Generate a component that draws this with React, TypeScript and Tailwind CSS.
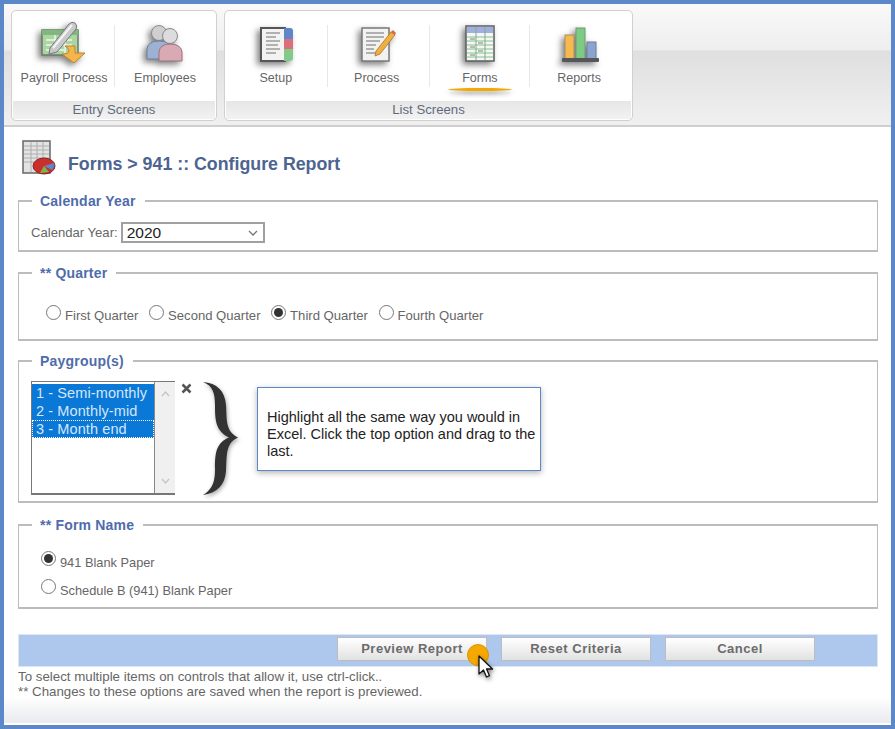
import { ReactNode } from "react";

const shadow = "drop-shadow-[-3px_3px_3px_rgba(0,0,0,0.5)]";

const PayrollIcon = () => (
  <svg width="46" height="42" viewBox="0 0 46 42" className={shadow}>
    <rect x="1" y="9" width="36" height="25" fill="#a9d6a2" stroke="#6b7a68" strokeWidth="1.5" />
    <rect x="1" y="9" width="36" height="5" fill="#7fb77c" />
    <path d="M5 19h26M5 24h26M5 29h18M14 14v18M24 14v18" stroke="#eef7ea" strokeWidth="1.5" />
    <path d="M9 27 L28 3 Q31 0 34 2 Q37 5 35 8 L16 31 L8 33 Z" fill="#c9c9cc" stroke="#77777c" strokeWidth="1" />
    <path d="M12 27 L31 4" stroke="#f4f4f4" strokeWidth="2" />
    <path d="M24 25 H34 V32 H44 L33 42 L21 33 Q28 33 28 30 Q28 27 24 25 Z" fill="#f5b54a" stroke="#b9852d" strokeWidth="1" />
  </svg>
);

const EmployeesIcon = () => (
  <svg width="38" height="38" viewBox="0 0 38 38" className={shadow}>
    <circle cx="13" cy="8" r="7.5" fill="#cfcfd1" stroke="#8a8a8e" />
    <path d="M1 34 V24 Q2 16 13 16 Q24 16 25 24 V34 Z" fill="#9db2d3" stroke="#6f7f9a" />
    <circle cx="24" cy="11" r="7.5" fill="#dcdcde" stroke="#8a8a8e" />
    <path d="M13 36 V27 Q14 19 24 19 Q35 19 36 27 V36 Z" fill="#d9aab4" stroke="#98727c" />
  </svg>
);

const SetupIcon = () => (
  <svg width="34" height="36" viewBox="0 0 34 36" className={shadow}>
    <rect x="1" y="1" width="24" height="33" fill="#f3f3f1" stroke="#55565a" strokeWidth="2" />
    <path d="M6 6h14M6 10h10M6 14h14M6 18h12M6 22h14M6 26h10" stroke="#9c9c9c" strokeWidth="1.6" />
    <path d="M24 1 H30 Q33 1 33 4 V12 H24 Z" fill="#5f86c8" />
    <path d="M24 12 H33 V22 H24 Z" fill="#d9707c" />
    <path d="M24 22 H33 V31 Q33 34 30 34 H24 Z" fill="#84c98a" />
  </svg>
);

const ProcessIcon = () => (
  <svg width="35" height="36" viewBox="0 0 35 36" className={shadow}>
    <rect x="1" y="1" width="27" height="33" fill="#f2f2f0" stroke="#77787b" strokeWidth="1.5" />
    <path d="M5 6h18M5 10h18M5 14h14M5 18h10M5 22h8M5 26h10" stroke="#9a9a9a" strokeWidth="1.6" />
    <path d="M15 24 L30 5 L34 8 L19 27 L14 29 Z" fill="#f0b040" stroke="#a9762a" strokeWidth="0.8" />
    <path d="M30 5 L32 3 L35 6 L34 8 Z" fill="#d76a55" />
  </svg>
);

const FormsIcon = () => (
  <svg width="30" height="38" viewBox="0 0 30 38" className={shadow}>
    <rect x="1" y="1" width="28" height="35" fill="#f5f7f2" stroke="#5c5d60" strokeWidth="1.5" />
    <rect x="2" y="2" width="26" height="6" fill="#9fb0e0" />
    <path d="M2 12h26M2 16h26M2 20h26M2 24h26M2 28h26M2 32h26" stroke="#7fc48a" strokeWidth="1" />
    <path d="M11 2v33M20 2v33" stroke="#8aa58f" strokeWidth="1" />
    <path d="M5 14h5M13 18h5M5 22h5M13 26h5M5 30h5" stroke="#77807a" strokeWidth="1.2" />
  </svg>
);

const ReportsIcon = () => (
  <svg width="37" height="36" viewBox="0 0 37 36" className={shadow}>
    <rect x="3" y="8" width="9" height="24" fill="#f6b94f" stroke="#a8915a" />
    <rect x="14" y="1" width="9" height="31" fill="#7dca85" stroke="#6f9a74" />
    <rect x="25" y="15" width="9" height="17" fill="#8aa4cf" stroke="#6f7f9a" />
    <rect x="0" y="31" width="37" height="4" rx="1" fill="#55565a" />
  </svg>
);

const HeadingIcon = () => (
  <svg width="34" height="36" viewBox="0 0 34 36">
    <rect x="1" y="1" width="27" height="32" fill="#e3e3e3" stroke="#66676a" strokeWidth="1.5" />
    <path d="M2 6h25M2 10h25M2 14h25M2 18h25M2 22h25M9 2v30M15 2v30M21 2v30" stroke="#a3a3a3" strokeWidth="0.8" />
    <ellipse cx="22" cy="26" rx="11" ry="8" fill="#c9302c" stroke="#8b2420" />
    <path d="M22 26 L32 23 Q33 27 30 30 Z" fill="#5f86c8" />
    <path d="M22 26 L27 32 L18 33 Z" fill="#7ab648" />
  </svg>
);

const NavItem = ({ icon, label, width, labelClass, divider, active }: { icon: ReactNode; label: string; width: string; labelClass?: string; divider?: boolean; active?: boolean }) => (
  <div className={`relative flex h-full flex-col items-center ${width}`}>
    <div className="flex h-[53px] items-end justify-center pb-px">{icon}</div>
    <span className={`mt-[6px] text-[12.5px] leading-[16px] text-[#666] ${labelClass ?? ""}`}>{label}</span>
    {active && (
      <div className="mt-[2px] h-[3px] w-[64px] rounded-[50%] bg-[#f5a800] shadow-[0_3px_4px_rgba(0,0,0,0.4)]" />
    )}
    {divider && <div className="absolute right-0 top-[14px] h-[62px] w-px bg-[#e8e8e8]" />}
  </div>
);

const Panel = ({ title, width, children }: { title: string; width: string; children: ReactNode }) => (
  <div className={`flex h-[111px] flex-col overflow-hidden rounded-[5px] border border-[#d0d0d0] bg-white ${width}`}>
    <div className="flex h-[90px] shrink-0 px-px">{children}</div>
    <div className="mx-px mb-px flex flex-1 items-center justify-center bg-gradient-to-b from-[#e6e6e6] to-[#f2f2f2] text-[13.2px] leading-[16px] text-[#5f6b7d]">
      {title}
    </div>
  </div>
);

const Group = ({ legend, height, className, children }: { legend: string; height: string; className?: string; children: ReactNode }) => (
  <fieldset className={`border-x border-y-2 border-[#bcbcbc] ${height} ${className ?? ""}`}>
    <legend className="ml-[13px] pl-[8px] pr-[9px] text-[14px] font-bold leading-[16px] tracking-[0.2px] text-[#4f6cab]">{legend}</legend>
    {children}
  </fieldset>
);

const Radio = ({ label, checked, small }: { label: string; checked?: boolean; small?: boolean }) => (
  <label className={`flex items-center gap-[4px] text-[#666] ${small ? "text-[12.8px]" : "text-[13.1px]"}`}>
    <span className={`flex h-[15px] w-[15px] items-center justify-center rounded-full border border-[#777] bg-white ${small ? "mb-[9px]" : "mb-[7px]"}`}>
      {checked && <span className="h-[9px] w-[9px] rounded-full bg-[#333]" />}
    </span>
    {label}
  </label>
);

const ActionButton = ({ label }: { label: string }) => (
  <button className="h-[24px] w-[150px] border border-[#bdbdbd] bg-gradient-to-b from-[#ffffff] to-[#e2e2e2] text-[13px] font-bold tracking-[0.5px] text-[#6b6b6b]">
    {label}
  </button>
);

export default function App() {
  return (
    <div className="relative h-screen w-full overflow-hidden border-4 border-[#5b88c9] bg-white font-['Liberation_Sans',Arial,sans-serif]">
      {/* Toolbar */}
      <div className="flex h-[123px] gap-[7px] border-b-2 border-[#cfcfcf] bg-[linear-gradient(#f9f9f9_0px,#eeeeee_46px,#dfdfdf_47px,#f0f0f0_100%)] pl-[7px] pt-[6px]">
        <Panel title="Entry Screens" width="w-[206px]">
          <NavItem icon={<PayrollIcon />} label="Payroll Process" width="w-[103px]" divider />
          <NavItem icon={<EmployeesIcon />} label="Employees" width="w-[101px]" />
        </Panel>
        <Panel title="List Screens" width="w-[409px]">
          <NavItem icon={<SetupIcon />} label="Setup" width="w-[102px]" labelClass="mr-[2px]" divider />
          <NavItem icon={<ProcessIcon />} label="Process" width="w-[102px]" labelClass="mr-[4px]" divider />
          <NavItem icon={<FormsIcon />} label="Forms" width="w-[101px]" divider active />
          <NavItem icon={<ReportsIcon />} label="Reports" width="w-[101px]" labelClass="mr-[3px]" />
        </Panel>
      </div>

      {/* Body */}
      <div className="flex h-[596px] flex-col bg-[linear-gradient(#ffffff_570px,#e9eaee_100%)] pl-[14px] pr-[13px]">
        <div className="flex h-[66px] shrink-0 items-start pl-[4px] pt-[13px]">
          <HeadingIcon />
          <h1 className="ml-[12px] mt-[13px] text-[17.8px] font-bold leading-[22px] text-[#4d6491]">Forms &gt; 941 :: Configure Report</h1>
        </div>

        <Group legend="Calendar Year" height="h-[59px]">
          <div className="flex items-center pl-[12px] pt-[13px]">
            <span className="text-[13.1px] text-[#666]">Calendar Year:</span>
            <div className="ml-[3px] flex h-[21px] w-[144px] items-center justify-between border-2 border-[#a0a0a0] bg-white pl-[4px] pr-[5px] text-[15.5px] text-[#222]">
              2020
              <svg width="10" height="6" viewBox="0 0 10 6" fill="none" stroke="#777" strokeWidth="1.3"><path d="M1 1l4 4 4-4" /></svg>
            </div>
          </div>
        </Group>

        <Group legend="** Quarter" height="h-[76px]" className="mt-[13px]">
          <div className="flex items-center gap-[10.6px] pl-[27px] pt-[24px]">
            <Radio label="First Quarter" />
            <Radio label="Second Quarter" />
            <Radio label="Third Quarter" checked />
            <Radio label="Fourth Quarter" />
          </div>
        </Group>

        <Group legend="Paygroup(s)" height="h-[150px]" className="mt-[12px]">
          <div className="flex items-start pl-[12px] pt-[12px]">
            <div className="flex h-[114px] w-[144px] border-b-2 border-l border-t border-[#555]/80 bg-white">
              <div className="flex w-[123px] flex-col border-r border-[#888] pt-[2px] text-[14.5px] leading-[18px] tracking-[0.1px] text-[#d4e6fa]">
                <div className="h-[18px] bg-[#0a78d7] pl-[4px]">1 - Semi-monthly</div>
                <div className="h-[18px] bg-[#0a78d7] pl-[4px]">2 - Monthly-mid</div>
                <div className="h-[18px] border border-dotted border-white bg-[#0a78d7] pl-[3px] leading-[16px]">3 - Month end</div>
              </div>
              <div className="flex flex-1 flex-col items-center justify-between bg-[#f0f0f0] py-[9px]">
                <svg width="9" height="6" viewBox="0 0 9 6" fill="none" stroke="#c4c4c4" strokeWidth="1.3"><path d="M1 5l3.5-4L8 5" /></svg>
                <svg width="9" height="6" viewBox="0 0 9 6" fill="none" stroke="#c4c4c4" strokeWidth="1.3"><path d="M1 1l3.5 4L8 1" /></svg>
              </div>
            </div>
            <svg width="11" height="11" viewBox="0 0 11 11" fill="none" stroke="#555" strokeWidth="2.5" className="ml-[6px] mt-[2px]"><path d="M1.5 1.5l8 8M9.5 1.5l-8 8" /></svg>
            <svg width="37" height="115" viewBox="0 0 37 115" fill="#333" className="ml-[11px] drop-shadow-[1px_2px_2px_rgba(0,0,0,0.35)]">
              <path d="M0 1 C14 2 22 10 23 24 C24 38 22 50 35 56.5 C22 62 24 76 23 90 C22 104 14 112 0 114 C10 108 12 100 12 88 C12 72 13 62 26 56.5 C13 50 12 40 12 25 C12 12 10 5 0 1 Z" />
            </svg>
            <div className="ml-[17px] mt-[6px] h-[84px] w-[284px] border border-[#5b88c9] bg-white pl-[9px] pt-[21px] text-[14.5px] leading-[17px] text-[#222] shadow-[0_2px_6px_rgba(0,0,0,0.3)]">
              Highlight all the same way you would in Excel. Click the top option and drag to the last.
            </div>
          </div>
        </Group>

        <Group legend="** Form Name" height="h-[92px]" className="mt-[14px]">
          <div className="flex flex-col gap-[4px] pl-[22px] pt-[18px]">
            <Radio label="941 Blank Paper" checked small />
            <Radio label="Schedule B (941) Blank Paper" small />
          </div>
        </Group>

        <div className="mt-[25px] flex h-[33px] shrink-0 items-start gap-[14px] border border-[#dde6f4] bg-[#aec7ec] pl-[318px] pt-[2px]">
          <ActionButton label="Preview Report" />
          <ActionButton label="Reset Criteria" />
          <ActionButton label="Cancel" />
        </div>
        <p className="mt-[2px] text-[13.3px] leading-[15px] text-[#666]">
          To select multiple items on controls that allow it, use ctrl-click..
          <br />
          ** Changes to these options are saved when the report is previewed.
        </p>
      </div>

      {/* Click marker over the Preview button */}
      <div className="absolute left-[463px] top-[640px] h-[22px] w-[22px] rounded-full border border-[#d99400] bg-[#f5a800]" />
      <svg width="18" height="25" viewBox="0 0 18 25" className="absolute left-[474px] top-[651px] drop-shadow-[1px_2px_2px_rgba(0,0,0,0.5)]">
        <path d="M1 1 V19 L5.5 15 L8.5 22 L11.5 20.7 L8.5 14 H14.5 Z" fill="#fff" stroke="#111" strokeWidth="1.3" strokeLinejoin="round" />
      </svg>
    </div>
  );
}
